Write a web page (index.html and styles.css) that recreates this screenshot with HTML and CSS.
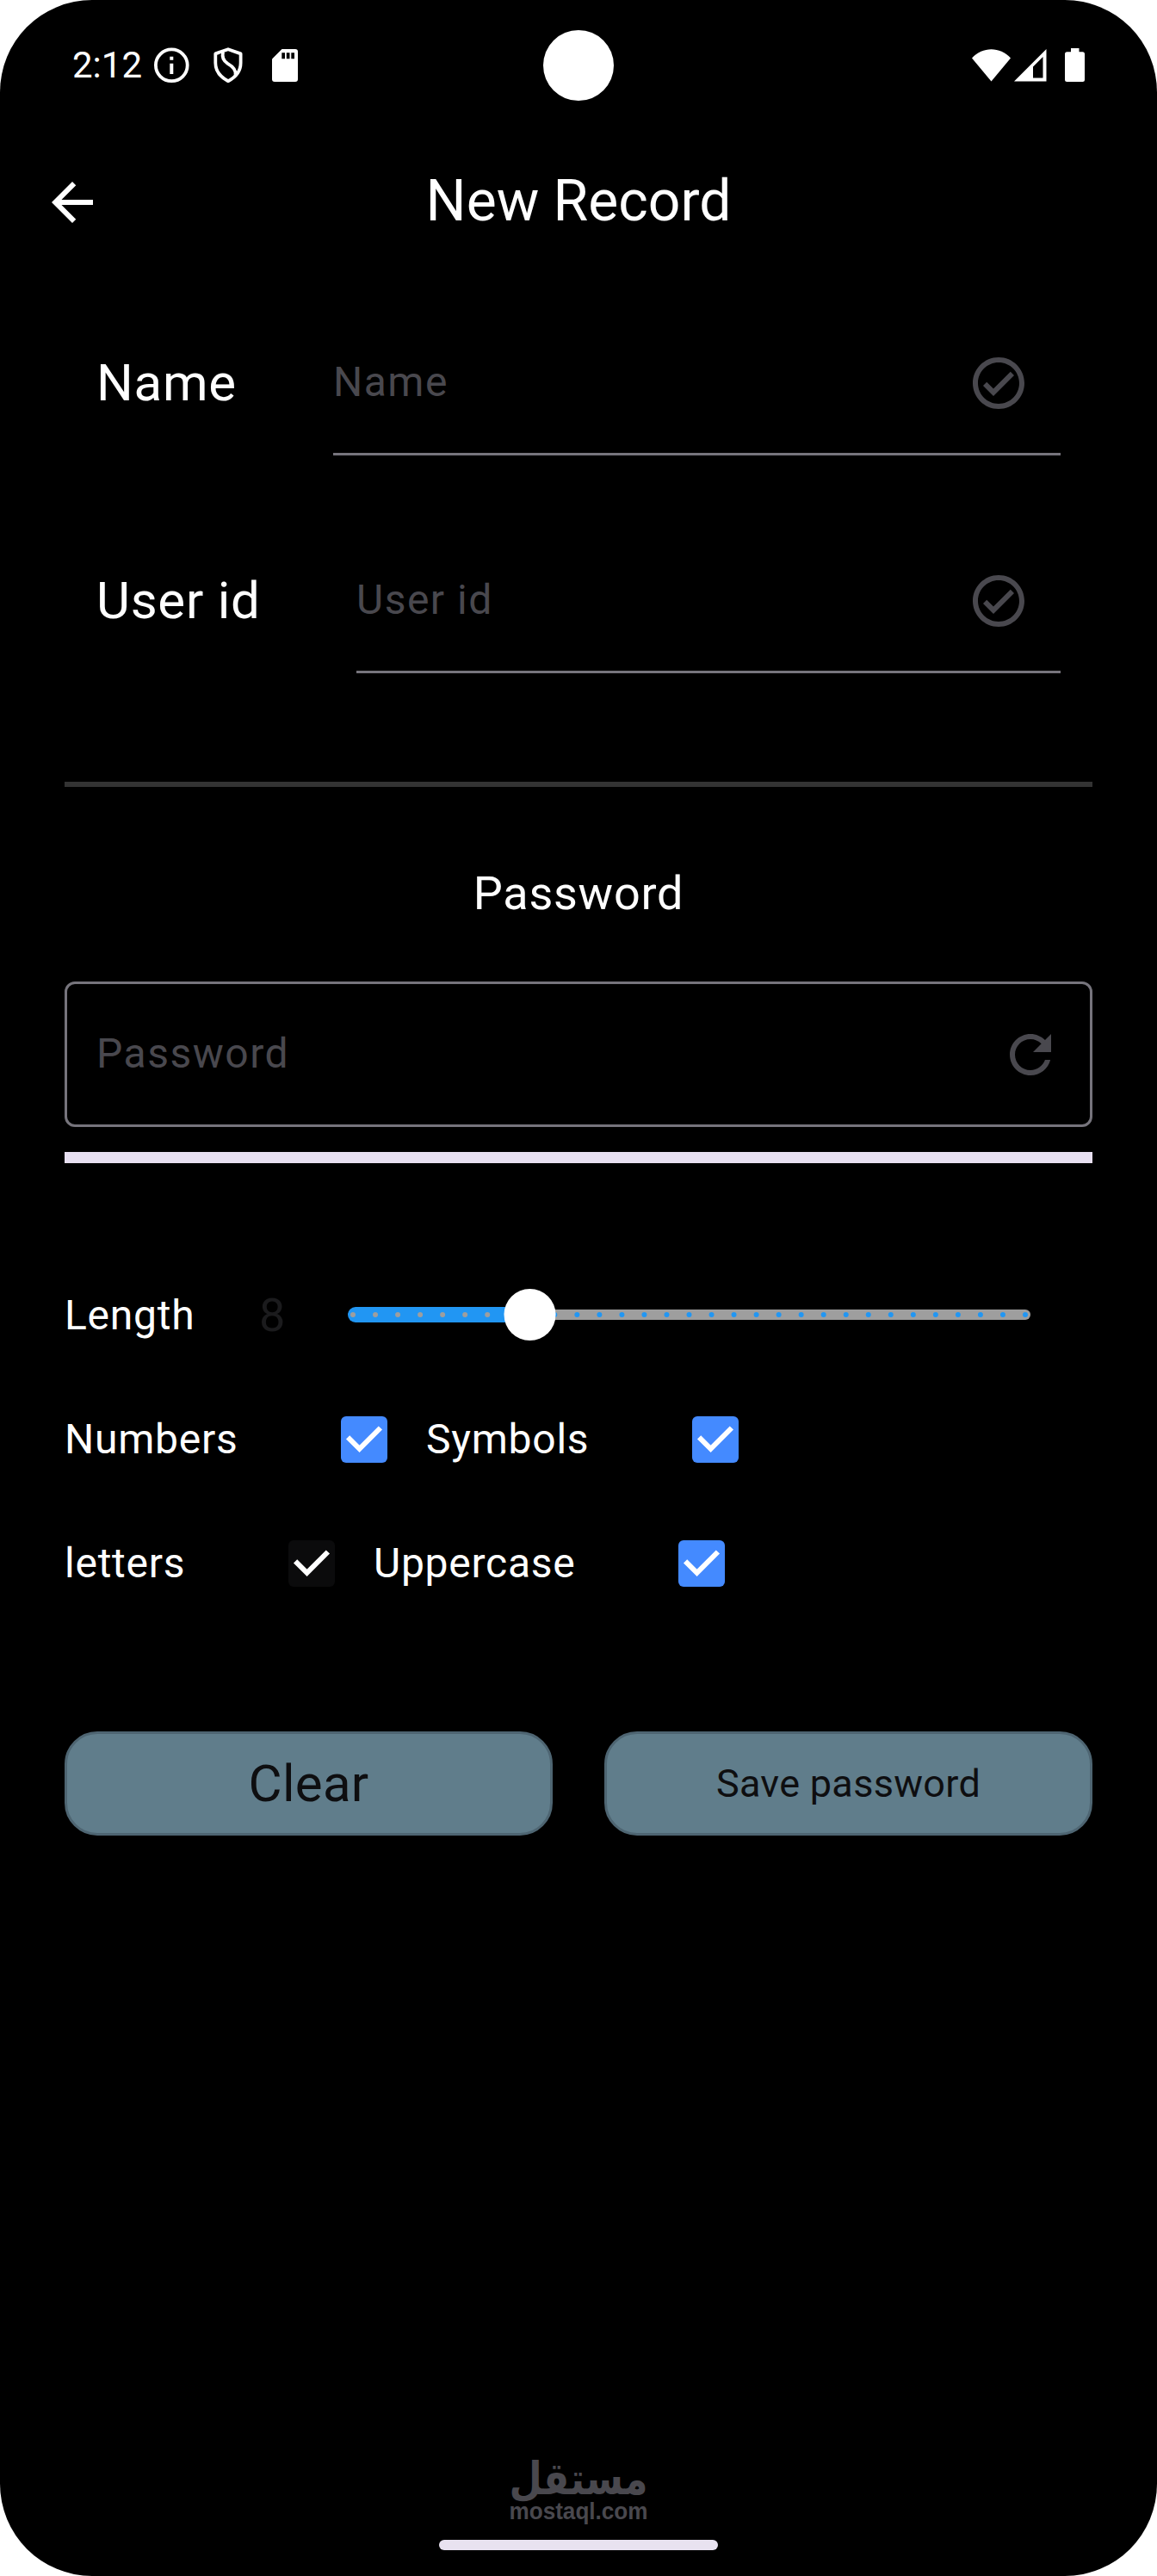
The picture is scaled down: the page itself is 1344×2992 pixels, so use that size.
FILE: index.html
```html
<!DOCTYPE html>
<html lang="en">
<head>
<meta charset="utf-8">
<title>New Record</title>
<link rel="stylesheet" href="styles.css">
</head>
<body>
<main class="screen">
  <header class="status">
    <span class="clock">2:12</span>
    <svg class="st-info" width="41" height="42" viewBox="0 0 41 42"><circle cx="20.3" cy="20.8" r="18.4" fill="none" stroke="#fff" stroke-width="3.8"/><path d="M18.3 10.7h4v4h-4zM18.3 18.7h4v12.4h-4z" fill="#fff"/></svg>
    <svg class="st-shield" width="34" height="42" viewBox="0 0 34 42" fill="none" stroke="#fff" stroke-width="3.8" stroke-linejoin="round"><path d="M17 2.2 31.6 7.4V18C31.6 27 26 34.500 17 39.200 8 34.500 2.300 27 2.300 18V7.400Z"/><path d="M11 5.500C9.500 12 12 16 16.500 18.800 23 22.500 26.500 26 25.500 32"/></svg>
    <svg class="st-sd" width="30" height="38" viewBox="0 0 30 38"><path d="M11.500 0H27q3 0 3 3V35q0 3-3 3H3q-3 0-3-3V11.500Z" fill="#fff"/><path d="M11.300 4.300h3.700v7h-3.700zM16.800 4.300h3.700v7h-3.700zM22.300 4.300H26v7h-3.700z" fill="#000"/></svg>
    <svg class="st-wifi" width="45" height="38" viewBox="0 0 45 38"><path d="M0 10.500C12.500-3.100 32.500-3.100 45 10.500L22.500 37.500Z" fill="#fff"/></svg>
    <svg class="st-signal" width="38" height="38" viewBox="0 0 38 38"><path fill-rule="evenodd" d="M0 37.500 37.500 0V37.500ZM22 20.500V33.500H33.500V9Z" fill="#fff"/></svg>
    <svg class="st-battery" width="23" height="39" viewBox="0 0 23 39"><path d="M7 0h9.500v4.200H20.500q2.500 0 2.500 2.500V36.500q0 2.500-2.500 2.500H2.500Q0 39 0 36.500V6.700q0-2.500 2.500-2.500H7Z" fill="#fff"/></svg>
    <span class="camera"></span>
  </header>

  <div class="appbar">
    <svg class="back" width="72" height="72" viewBox="0 0 24 24"><path d="M20 11H7.830l5.590-5.590L12 4l-8 8 8 8 1.410-1.410L7.830 13H20v-2z" fill="#fff"/></svg>
    <h1 class="title">New Record</h1>
  </div>

  <section class="record">
    <div class="field-row">
      <label class="field-label name-label">Name</label>
      <div class="field"><span class="hint">Name</span>
        <svg class="check-circle" width="72" height="72" viewBox="0 0 24 24"><path d="M12 2C6.480 2 2 6.480 2 12s4.480 10 10 10 10-4.480 10-10S17.520 2 12 2zm0 18c-4.410 0-8-3.590-8-8s3.590-8 8-8 8 3.590 8 8-3.590 8-8 8zm4.590-12.420L10 14.170l-2.590-2.580L6 13l4 4 8-8z"/></svg>
      </div>
    </div>
    <div class="field-row">
      <label class="field-label user-label">User id</label>
      <div class="field"><span class="hint">User id</span>
        <svg class="check-circle" width="72" height="72" viewBox="0 0 24 24"><path d="M12 2C6.480 2 2 6.480 2 12s4.480 10 10 10 10-4.480 10-10S17.520 2 12 2zm0 18c-4.410 0-8-3.590-8-8s3.590-8 8-8 8 3.590 8 8-3.590 8-8 8zm4.590-12.420L10 14.170l-2.590-2.580L6 13l4 4 8-8z"/></svg>
      </div>
    </div>
  </section>

  <hr class="divider">

  <section class="password">
    <h2 class="heading">Password</h2>
    <div class="password-box"><span class="hint">Password</span>
      <svg class="refresh" width="72" height="72" viewBox="0 0 24 24"><path d="M17.650 6.350C16.200 4.900 14.210 4 12 4c-4.420 0-7.990 3.580-7.990 8s3.570 8 7.990 8c3.730 0 6.840-2.550 7.730-6h-2.080c-.82 2.330-3.040 4-5.650 4-3.310 0-6-2.690-6-6s2.690-6 6-6c1.660 0 3.140.69 4.220 1.780L13 11h7V4l-2.350 2.350z"/></svg>
    </div>
    <div class="strength"></div>

    <div class="length-row">
      <span class="option length-label">Length</span>
      <span class="length-value">8</span>
      <svg class="slider" width="793" height="60" viewBox="0 0 793 60">
        <rect x="190" y="24" width="603" height="12" rx="6" fill="#9e9e9e"/>
        <rect x="0" y="21" width="220" height="18" rx="9" fill="#2196f3"/>
        <path d="M6 30H190" class="ticks ticks-active"/>
        <path d="M240.300 30H788" class="ticks ticks-rest"/>
        <circle cx="211.500" cy="30" r="30" fill="#fff"/>
      </svg>
    </div>

    <div class="options options-a">
      <span class="option">Numbers</span>
      <svg class="box" viewBox="0 0 54 54"><path d="M8.100 24.300 21.600 37.800 45.900 13.500"/></svg>
      <span class="option">Symbols</span>
      <svg class="box" viewBox="0 0 54 54"><path d="M8.100 24.300 21.600 37.800 45.900 13.500"/></svg>
    </div>
    <div class="options options-b">
      <span class="option">letters</span>
      <svg class="box box-dark" viewBox="0 0 54 54"><path d="M8.100 24.300 21.600 37.800 45.900 13.500"/></svg>
      <span class="option">Uppercase</span>
      <svg class="box" viewBox="0 0 54 54"><path d="M8.100 24.300 21.600 37.800 45.900 13.500"/></svg>
    </div>
  </section>

  <div class="actions">
    <button class="btn btn-clear">Clear</button>
    <button class="btn btn-save">Save password</button>
  </div>

  <footer class="footer">
    <svg class="brand" width="170" height="84" viewBox="0 0 170 84">
      <text class="brand-ar" x="85" y="43" text-anchor="middle" textLength="161" lengthAdjust="spacingAndGlyphs">مستقل</text>
      <text class="brand-en" x="85" y="72" text-anchor="middle" textLength="161" lengthAdjust="spacingAndGlyphs">mostaql.com</text>
    </svg>
    <div class="home"></div>
  </footer>
</main>
</body>
</html>
```
FILE: styles.css
```css
* { box-sizing: border-box; }

body {
  margin: 0;
  background: #fff;
  font-family: Roboto, "Liberation Sans", sans-serif;
  color: #fff;
}

svg { display: block; flex: none; }
h1, h2 { margin: 0; font-weight: 400; }

.screen {
  width: 1344px;
  height: 2992px;
  background: #000;
  border-radius: 107px;
  overflow: hidden;
  display: flex;
  flex-direction: column;
}

/* Status bar */
.status {
  position: relative;
  height: 151px;
  padding: 0 84px;
  display: flex;
  align-items: center;
}
.clock { width: 95px; font-size: 42px; line-height: 50px; }
.st-shield { margin-left: 28px; }
.st-sd { margin-left: 34px; }
.st-wifi { margin-left: auto; }
.st-signal { margin-left: 4px; }
.st-battery { margin-left: 21px; }
.camera {
  position: absolute;
  left: 631px;
  top: 35px;
  width: 82px;
  height: 82px;
  border-radius: 50%;
  background: #fff;
}

/* App bar */
.appbar {
  height: 168px;
  padding: 0 48px;
  display: grid;
  grid-template-columns: 72px 1fr 72px;
  align-items: center;
}
.title { font-size: 66px; line-height: 80px; text-align: center; padding-bottom: 3px; }

/* Record fields */
.record {
  padding: 42px 112px 0;
  display: flex;
  flex-direction: column;
  gap: 85px;
}
.field-row { display: flex; height: 168px; align-items: center; }
.field-label { font-size: 60px; line-height: 70px; letter-spacing: 0.75px; }
.name-label { width: 275px; }
.user-label { width: 302px; }
.field {
  flex: 1;
  height: 168px;
  border-bottom: 3px solid #76747c;
  display: flex;
  align-items: center;
  justify-content: space-between;
  padding-right: 36px;
}
.hint { font-size: 48px; line-height: 56px; letter-spacing: 1.5px; color: #49484e; }
.check-circle, .refresh { fill: #49484e; }
.check-circle { margin-top: 3px; }

.divider {
  height: 6px;
  margin: 126px 75px 0;
  width: 1194px;
  border: 0;
  background: #333;
}

/* Password */
.password { padding: 0 75px; }
.heading {
  margin-top: 92px;
  font-size: 54px;
  line-height: 64px;
  letter-spacing: 0.75px;
  text-align: center;
}
.password-box {
  margin-top: 70px;
  height: 169px;
  border: 3px solid #76747c;
  border-radius: 12px;
  padding: 0 33px 0 34px;
  display: flex;
  align-items: center;
  justify-content: space-between;
}
.password-box .hint { padding-bottom: 2px; display: block; }
.strength { margin-top: 29px; height: 13px; background: #e8e0f2; }

.length-row {
  margin-top: 146px;
  height: 60px;
  display: flex;
  align-items: center;
}
.option { font-size: 48px; line-height: 56px; letter-spacing: 0.75px; }
.length-label { width: 226px; padding-top: 2px; }
.length-value { width: 103px; font-size: 54px; line-height: 60px; padding-top: 2px; color: #1b1b1d; }
.ticks { fill: none; stroke-width: 6; stroke-linecap: round; stroke-dasharray: 0 26.033; }
.ticks-active { stroke: #9e9e9e; }
.ticks-rest { stroke: #2196f3; }

.options { height: 144px; display: grid; align-items: center; }
.options-a { margin-top: 43px; grid-template-columns: 321px 99px 309px 54px; }
.options-b { grid-template-columns: 260px 99px 354px 54px; }
.box { width: 54px; height: 54px; border-radius: 6px; background: #448aff; }
.box path { fill: none; stroke: #fff; stroke-width: 6; }
.box-dark { background: #0b0b0c; }

/* Actions */
.actions {
  margin-top: 123px;
  padding: 0 75px;
  display: grid;
  grid-template-columns: 1fr 1fr;
  gap: 60px;
}
.btn {
  height: 121px;
  padding: 0;
  border: 3px solid #4e6572;
  border-radius: 38px;
  background: #607d8b;
  color: #0e0e10;
  font-family: inherit;
}
.btn-clear { font-size: 60px; line-height: 70px; letter-spacing: 0.3px; }
.btn-save { font-size: 45px; line-height: 52px; letter-spacing: 0.3px; padding-top: 1px; }

/* Footer */
.footer {
  margin-top: auto;
  padding-bottom: 30px;
  display: flex;
  flex-direction: column;
  align-items: center;
}
.brand { overflow: visible; fill: #49484e; margin-bottom: 12px; }
.brand-ar { font: 700 52px "DejaVu Sans", sans-serif; }
.brand-en { font: 700 28px "Liberation Sans", sans-serif; }
.home { width: 324px; height: 12px; border-radius: 6px; background: #e8e2f0; }
```
